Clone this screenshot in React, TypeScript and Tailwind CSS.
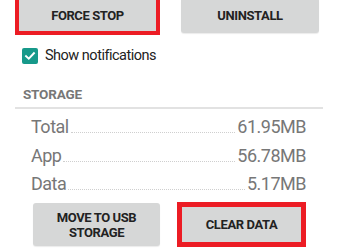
import React from 'react';

const rows = [
  { label: 'Total', value: '61.95MB' },
  { label: 'App', value: '56.78MB' },
  { label: 'Data', value: '5.17MB' },
];

export default function App() {
  return (
    <div className="relative h-[250px] w-[338px] overflow-hidden bg-white font-['Roboto',sans-serif]">
      {/* top actions */}
      <div className="-mt-[4px] flex items-start pl-[15px]">
        <div className="h-[39px] w-[145px] border-4 border-[#ec1c24]">
          <button className="flex h-full w-full items-center justify-center bg-[#d6d7d7] text-[13px] font-bold tracking-[-0.4px] text-[#222]">
            FORCE STOP
          </button>
        </div>
        <button className="ml-[21px] mt-[2px] flex h-[35px] w-[138px] items-center justify-center rounded-[3px] bg-[#d6d7d7] text-[13px] font-bold tracking-[-0.4px] text-[#222] shadow-[0_1px_1px_rgba(0,0,0,0.08)]">
          UNINSTALL
        </button>
      </div>

      {/* notifications */}
      <div className="ml-[22px] mt-[13px] flex h-[16px] items-center">
        <span className="flex h-[16px] w-[16px] items-center justify-center rounded-[2px] bg-[#17998a]">
          <svg viewBox="0 0 16 16" className="h-[14px] w-[14px]" fill="none" stroke="white" strokeWidth={2.2} strokeLinecap="square">
            <polyline points="3.5,8.2 6.6,11 12.5,4.8" />
          </svg>
        </span>
        <span className="ml-[7px] text-[14.5px] leading-[16px] tracking-[-0.5px] text-[#222]">Show notifications</span>
      </div>

      {/* storage */}
      <div className="ml-[23px] mt-[23px] h-[14px] text-[13.5px] font-bold leading-[14px] tracking-[-0.2px] text-[#777]">STORAGE</div>
      <div className="ml-[15px] mt-[6px] h-[2px] w-[308px] bg-[#e2e2e2]" />

      <div className="ml-[31px] mt-[4px] w-[275px]">
        {rows.map((r) => (
          <div key={r.label} className="flex h-[28.5px] items-baseline text-[18px] leading-[28px] tracking-[-0.5px] text-[#777]">
            <span>{r.label}</span>
            <span className="mx-[2px] flex-1 border-b border-dotted border-[#cfcfcf]" />
            <span>{r.value}</span>
          </div>
        ))}
      </div>

      {/* bottom actions */}
      <div className="mt-[3.5px] flex items-start pl-[33px]">
        <button className="mt-px flex h-[43px] w-[127px] flex-col items-center justify-center rounded-[3px] bg-[#d6d7d7] text-[13px] font-bold leading-[15px] tracking-[-0.4px] text-[#222] shadow-[0_1px_1px_rgba(0,0,0,0.08)]">
          <span>MOVE TO USB</span>
          <span>STORAGE</span>
        </button>
        <div className="ml-[17px] h-[45px] w-[129px] border-[5px] border-[#ec1c24]">
          <button className="flex h-full w-full items-center justify-center bg-[#d6d7d7] text-[13px] font-bold tracking-[-0.4px] text-[#222]">
            CLEAR DATA
          </button>
        </div>
      </div>
    </div>
  );
}
